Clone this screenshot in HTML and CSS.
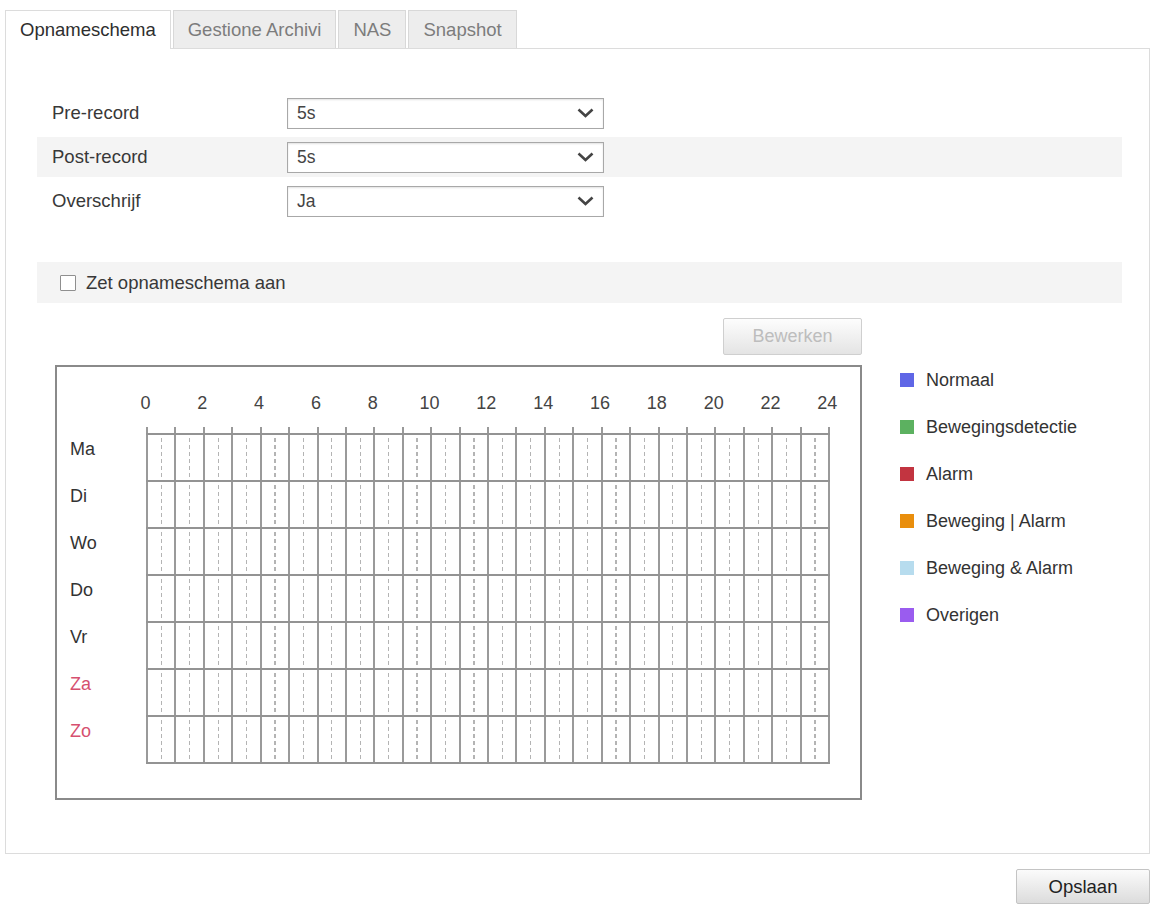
FILE: index.html
```html
<!DOCTYPE html>
<html lang="nl">
<head>
<meta charset="utf-8">
<title>Opnameschema</title>
<link rel="stylesheet" href="styles.css">
</head>
<body>
<div class="page">
  <div class="tabs">
    <div class="tab active">Opnameschema</div>
    <div class="tab">Gestione Archivi</div>
    <div class="tab">NAS</div>
    <div class="tab">Snapshot</div>
  </div>
  <div class="panel">
    <div class="form">
      <div class="row">
        <div class="label">Pre-record</div>
        <div class="select"><span>5s</span><svg class="chev" width="17" height="10" viewBox="0 0 17 10"><polyline points="1.5,1.5 8.5,8 15.5,1.5" fill="none" stroke="#444" stroke-width="2.6"/></svg></div>
      </div>
      <div class="row alt">
        <div class="label">Post-record</div>
        <div class="select"><span>5s</span><svg class="chev" width="17" height="10" viewBox="0 0 17 10"><polyline points="1.5,1.5 8.5,8 15.5,1.5" fill="none" stroke="#444" stroke-width="2.6"/></svg></div>
      </div>
      <div class="row">
        <div class="label">Overschrijf</div>
        <div class="select"><span>Ja</span><svg class="chev" width="17" height="10" viewBox="0 0 17 10"><polyline points="1.5,1.5 8.5,8 15.5,1.5" fill="none" stroke="#444" stroke-width="2.6"/></svg></div>
      </div>
    </div>
    <div class="check-row"><span class="checkbox"></span><span>Zet opnameschema aan</span></div>
    <div class="schedule">
      <div class="sched-main">
        <div class="toolbar"><button class="btn btn-disabled" disabled>Bewerken</button></div>
        <div class="box">
          <div class="hours">
            <span>0</span><span>2</span><span>4</span><span>6</span><span>8</span><span>10</span><span>12</span><span>14</span><span>16</span><span>18</span><span>20</span><span>22</span><span>24</span>
          </div>
          <div class="ruler"></div>
          <div class="days">
            <div class="day"><div class="day-label">Ma</div><div class="track"></div></div>
            <div class="day"><div class="day-label">Di</div><div class="track"></div></div>
            <div class="day"><div class="day-label">Wo</div><div class="track"></div></div>
            <div class="day"><div class="day-label">Do</div><div class="track"></div></div>
            <div class="day"><div class="day-label">Vr</div><div class="track"></div></div>
            <div class="day"><div class="day-label weekend">Za</div><div class="track"></div></div>
            <div class="day last"><div class="day-label weekend">Zo</div><div class="track"></div></div>
          </div>
        </div>
      </div>
      <ul class="legend">
        <li><span class="swatch sw-normal"></span>Normaal</li>
        <li><span class="swatch sw-motion"></span>Bewegingsdetectie</li>
        <li><span class="swatch sw-alarm"></span>Alarm</li>
        <li><span class="swatch sw-or"></span>Beweging | Alarm</li>
        <li><span class="swatch sw-and"></span>Beweging &amp; Alarm</li>
        <li><span class="swatch sw-other"></span>Overigen</li>
      </ul>
    </div>
  </div>
  <div class="footer"><button class="btn btn-save">Opslaan</button></div>
</div>
</body>
</html>
```
FILE: styles.css
```css
body {
  margin: 0;
  background: #fff;
  font-family: "Liberation Sans", Arial, sans-serif;
  font-size: 18.5px;
  color: #333;
}

.page {
  padding: 10px 0 0 5px;
  width: 1145px;
}

.tabs {
  display: flex;
  align-items: flex-end;
  gap: 2px;
  height: 38px;
}

.tab {
  height: 38px;
  box-sizing: border-box;
  padding: 0 14px;
  display: flex;
  align-items: center;
  background: #ededed;
  border: 1px solid #d8d8d8;
  border-bottom: none;
  color: #7c7c7c;
}

.tab.active {
  background: #fff;
  color: #2e2e2e;
  height: 39px;
  margin-bottom: -1px;
  position: relative;
  z-index: 1;
  border-color: #dcdcdc;
}

.panel {
  box-sizing: border-box;
  width: 1145px;
  height: 806px;
  border: 1px solid #dcdcdc;
  padding: 44px 27px 0 31px;
}

.row {
  display: flex;
  align-items: center;
  height: 40px;
  margin-bottom: 4px;
  padding-left: 15px;
}

.row.alt {
  background: #f4f4f4;
}

.label {
  width: 235px;
  flex: none;
  color: #383838;
}

.select {
  width: 317px;
  height: 31px;
  box-sizing: border-box;
  border: 1px solid #a8a8a8;
  box-shadow: inset 0 1px 2px rgba(0, 0, 0, 0.12);
  background: #fff;
  display: flex;
  align-items: center;
  justify-content: space-between;
  padding: 0 9px;
  font-size: 17.5px;
  color: #444;
}

.chev {
  display: block;
}

.check-row {
  margin-top: 41px;
  height: 41px;
  background: #f4f4f4;
  display: flex;
  align-items: center;
  gap: 10px;
  padding-left: 23px;
  color: #383838;
}

.checkbox {
  width: 16px;
  height: 16px;
  box-sizing: border-box;
  border: 1px solid #8f8f8f;
  background: #fff;
  border-radius: 1px;
}

.schedule {
  display: flex;
  margin-top: 15px;
  margin-left: 18px;
}

.sched-main {
  width: 807px;
  flex: none;
}

.toolbar {
  display: flex;
  justify-content: flex-end;
}

.btn {
  font-family: "Liberation Sans", Arial, sans-serif;
  font-size: 18px;
  box-sizing: border-box;
  border-radius: 2px;
  padding: 0;
}

.btn-disabled {
  width: 139px;
  height: 37px;
  border: 1px solid #cfcfcf;
  background: linear-gradient(#fdfdfd, #e4e4e4);
  color: #bdbdbd;
}

.box {
  margin-top: 10px;
  height: 435px;
  box-sizing: border-box;
  border: 2px solid #8a8a8a;
  padding-top: 26px;
}

.hours {
  display: flex;
  margin-left: 60px;
  height: 20px;
  line-height: 20px;
}

.hours span {
  flex: none;
  width: 56.83px;
  text-align: center;
  font-size: 18px;
  color: #444;
}

.ruler {
  margin: 14px 0 0 89px;
  width: 684px;
  height: 6px;
  background: repeating-linear-gradient(to right, #999 0 2px, transparent 2px 28.42px);
}

.day {
  display: flex;
  height: 47px;
}

.day-label {
  width: 89px;
  flex: none;
  box-sizing: border-box;
  padding: 5px 0 0 13px;
  line-height: 22px;
  font-size: 18px;
  color: #333;
}

.day-label.weekend {
  color: #d6506f;
}

.track {
  position: relative;
  width: 684px;
  height: 47px;
  box-sizing: border-box;
  border-top: 2px solid #939393;
  background: repeating-linear-gradient(to right, #9a9a9a 0 2px, transparent 2px 28.42px);
}

.day.last {
  height: 49px;
}

.day.last .track {
  height: 49px;
  border-bottom: 2px solid #939393;
}

.track::before {
  content: "";
  position: absolute;
  left: 0;
  right: 0;
  top: 3px;
  bottom: 0;
  background: repeating-linear-gradient(to right, transparent 0 14.7px, #b4b4b4 14.7px 15.9px, transparent 15.9px 28.42px);
  -webkit-mask-image: repeating-linear-gradient(to bottom, #000 0 4px, transparent 4px 7px);
  mask-image: repeating-linear-gradient(to bottom, #000 0 4px, transparent 4px 7px);
}

.legend {
  list-style: none;
  margin: 0 0 0 38px;
  padding: 51px 0 0;
  display: flex;
  flex-direction: column;
  gap: 25px;
}

.legend li {
  display: flex;
  align-items: center;
  gap: 12px;
  height: 22px;
  font-size: 18px;
  color: #333;
  white-space: nowrap;
}

.swatch {
  width: 14px;
  height: 14px;
  flex: none;
}

.sw-normal { background: #5f66e6; }
.sw-motion { background: #5cb160; }
.sw-alarm { background: #c23440; }
.sw-or { background: #e98e0c; }
.sw-and { background: #b7dcee; }
.sw-other { background: #9a5cef; }

.footer {
  display: flex;
  justify-content: flex-end;
  margin-top: 15px;
}

.btn-save {
  width: 134px;
  height: 35px;
  border: 1px solid #c4c4c4;
  background: linear-gradient(#fbfbfb, #dcdcdc);
  color: #222;
  font-size: 18.5px;
}
```
